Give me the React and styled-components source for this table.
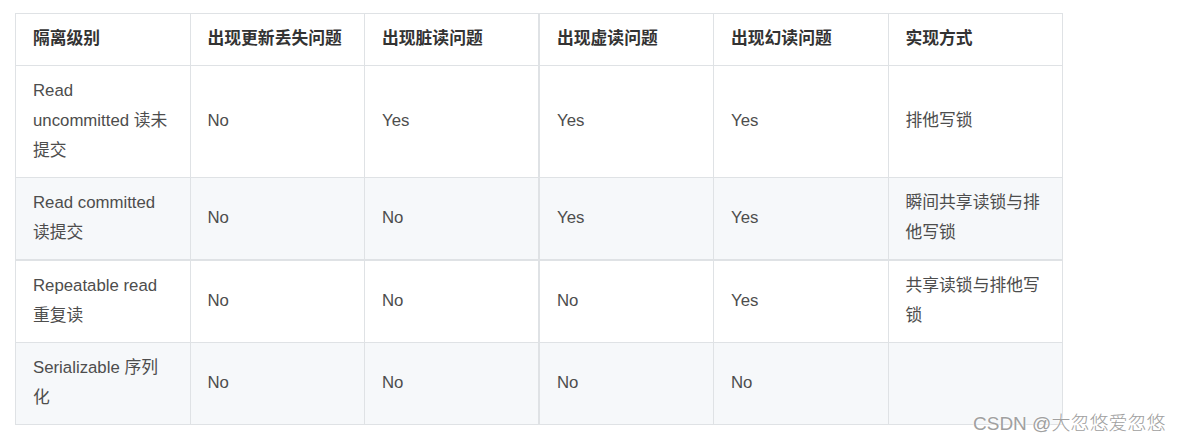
import React from "react";
import styled, { createGlobalStyle } from "styled-components";

const Global = createGlobalStyle`
  html, body { margin: 0; padding: 0; background: #ffffff; }
  body { font-family: "Liberation Sans", "Noto Sans CJK SC", Arial, sans-serif; }
`;

const Page = styled.div`
  position: relative;
  width: 1181px;
  height: 441px;
  padding: 13px 0 0 15px;
  box-sizing: border-box;
`;

const Table = styled.table`
  width: 1048px;
  table-layout: fixed;
  border-collapse: collapse;
  font-size: 16.8px;
  line-height: 30px;
`;

const Row = styled.tr`
  background: ${(p) => (p.$alt ? "#f6f8fa" : "#ffffff")};
  ${(p) => (p.$thickTop ? "& > td { border-top: 2px solid #dfe2e5; }" : "")}
`;

const Th = styled.th`
  border: 1px solid #dfe2e5;
  ${(p) => (p.$thickLeft ? "border-left: 2px solid #dfe2e5;" : "")}
  padding: 10px 18px 11px 17px;
  text-align: left;
  font-weight: 700;
  color: #333333;
  vertical-align: middle;
`;

const Td = styled.td`
  border: 1px solid #dfe2e5;
  ${(p) => (p.$thickLeft ? "border-left: 2px solid #dfe2e5;" : "")}
  padding: 10px 18px 11px 17px;
  text-align: left;
  color: #4d4d4d;
  vertical-align: middle;
  word-break: break-word;
`;

const Watermark = styled.div`
  position: absolute;
  left: 973px;
  top: 411px;
  font-family: "Liberation Sans", "Noto Sans CJK SC", sans-serif;
  font-size: 19px;
  line-height: 26px;
  font-weight: 300;
  color: #a0a0a0;
  white-space: nowrap;
  text-shadow: 0 0 2px #ffffff, 0 0 2px #ffffff;
`;

const headers = ["隔离级别", "出现更新丢失问题", "出现脏读问题", "出现虚读问题", "出现幻读问题", "实现方式"];

const rows = [
  ["Read uncommitted 读未提交", "No", "Yes", "Yes", "Yes", "排他写锁"],
  ["Read committed 读提交", "No", "No", "Yes", "Yes", "瞬间共享读锁与排他写锁"],
  ["Repeatable read 重复读", "No", "No", "No", "Yes", "共享读锁与排他写锁"],
  ["Serializable 序列化", "No", "No", "No", "No", ""],
];

export default function App() {
  return (
    <>
      <Global />
      <Page>
        <Table>
          <thead>
            <Row>
              {headers.map((h, i) => (
                <Th key={i} $thickLeft={i === 3}>{h}</Th>
              ))}
            </Row>
          </thead>
          <tbody>
            {rows.map((r, ri) => (
              <Row key={ri} $alt={ri % 2 === 1} $thickTop={ri === 2}>
                {r.map((c, ci) => (
                  <Td key={ci} $thickLeft={ci === 3}>{c}</Td>
                ))}
              </Row>
            ))}
          </tbody>
        </Table>
        <Watermark>CSDN @大忽悠爱忽悠</Watermark>
      </Page>
    </>
  );
}
